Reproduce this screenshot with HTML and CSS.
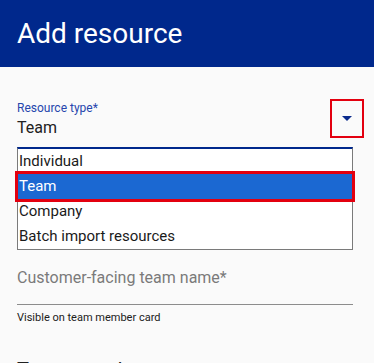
FILE: index.html
```html
<!DOCTYPE html>
<html>
<head>
    <title>Add resource</title>
    <meta charset="UTF-8">
    <link rel="stylesheet" href="styles.css">
</head>
<body>
    <!-- Header -->
    <div class="app-bar">
        <h1>Add resource</h1>
    </div>

    <div class="form-body">
        <!-- Resource type select (open) -->
        <div class="select-field">
            <label class="field-label">Resource type*</label>
            <div class="select-value">Team</div>
            <div class="select-arrow">
                <svg width="10" height="5" viewBox="0 0 10 5"><path d="M0 0 L10 0 L5 5 Z" fill="#0a2a8c"/></svg>
            </div>
            <ul class="option-list">
                <li>Individual</li>
                <li class="selected">Team</li>
                <li>Company</li>
                <li>Batch import resources</li>
            </ul>
        </div>

        <!-- Team name -->
        <div class="text-field">
            <div class="placeholder">Customer-facing team name*</div>
        </div>
        <div class="helper-text">Visible on team member card</div>

        <h2 class="section-title">Team members</h2>
    </div>
</body>
</html>
```

FILE: styles.css
```css
body {
    margin: 0;
    padding: 0;
    width: 374px;
    height: 363px;
    overflow: hidden;
    font-family: Roboto, "Liberation Sans", sans-serif;
    background-color: #fafafa;
    color: #212121;
}
.app-bar {
    height: 67px;
    background-color: #00288c;
    display: flex;
    align-items: center;
    padding: 0 17px;
}
.app-bar h1 {
    margin: 0;
    font-size: 28px;
    font-weight: 400;
    color: #fff;
    padding-bottom: 1px;
}
.form-body {
    padding: 0 21px 0 17px;
}
.select-field {
    position: relative;
    padding-top: 34px;
}
.field-label {
    display: block;
    font-size: 12px;
    line-height: 14px;
    color: #2646ad;
}
.select-value {
    font-size: 16px;
    line-height: 24px;
    margin-top: 1px;
}
/* annotation box round the arrow */
.select-arrow {
    position: absolute;
    top: 32px;
    right: -11px;
    width: 30px;
    height: 35px;
    border: 2px solid #e3000f;
    display: flex;
    align-items: center;
    justify-content: center;
}
.option-list {
    list-style: none;
    margin: 7px 0 0;
    padding: 0;
    border: 1px solid #7a7a7a;
    border-top: 2px solid #00288c;
    background-color: #fff;
}
.option-list li {
    font-size: 15px;
    line-height: 25px;
    height: 25px;
    padding-left: 1px;
    color: #1a1a1a;
}
.option-list li.selected {
    background-color: #1b68d2;
    color: #fff;
    outline: 3px solid #e3000f;
    outline-offset: 0;
    position: relative;
}
.text-field {
    margin-top: 16px;
    height: 38px;
    border-bottom: 1px solid #8c8c8c;
}
.placeholder {
    font-size: 16px;
    line-height: 24px;
    color: #7a7a7a;
}
.helper-text {
    font-size: 11px;
    line-height: 14px;
    margin-top: 6px;
    color: #212121;
}
.section-title {
    margin: 33px 0 0;
    font-size: 20px;
    font-weight: 400;
    color: #212121;
}
```
